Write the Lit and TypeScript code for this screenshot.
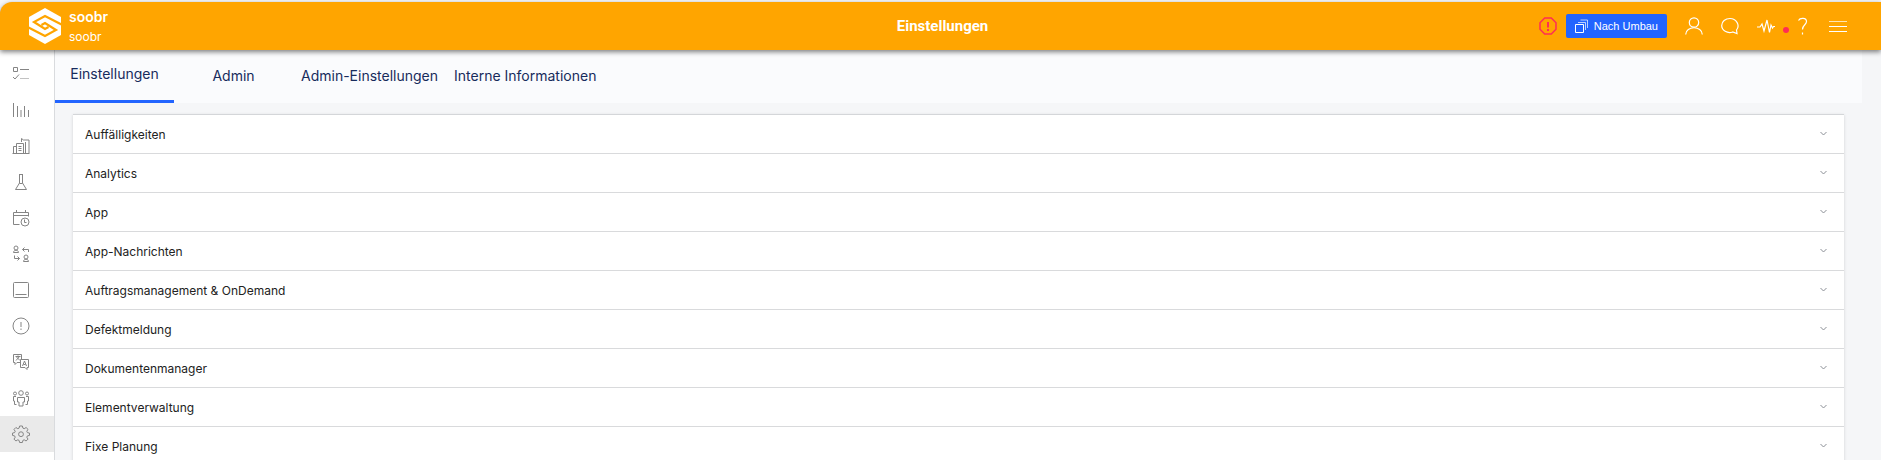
import { LitElement, html, css, svg } from "lit";
import { customElement, property, state } from "lit/decorators.js";

const icon = (body: unknown, w = 18, h = 18) =>
  html`<svg width=${w} height=${h} viewBox="0 0 ${w} ${h}" fill="none" stroke="currentColor" aria-hidden="true">${body}</svg>`;

const sideIcons: Array<{ label: string; body: unknown }> = [
  { label: "Aufgaben", body: svg`<path d="M1.500 2.500h4v4h-4zM8 4.500h9M1 12l2 2 4-4.500"/><path opacity=".5" d="M8 13.500h9"/>` },
  { label: "Statistik", body: svg`<path d="M1.500 2v14M5.500 5v11M9 9v7M12.500 5v11M16.500 9v7"/>` },
  { label: "Gebäude", body: svg`<path d="M.5 16.500h17M1.500 16V9.500h3M4.500 16V6.500h7V16M9.500 5V1.500l2 1.500h5.500V16M13.500 5V16M6.500 9.500h3M6.500 11.500h3M6.500 13.500h3"/>` },
  { label: "Labor", body: svg`<path d="M7 1.500h4M7.500 2v8L3.500 16.500h11L10.500 10V2M7.500 10.500h3"/>` },
  { label: "Kalender", body: svg`<path d="M1.500 15.500v-12h15v4M1.500 6.500h15M4.500 1v3M13.500 1v3M1.500 15.500h6"/><circle cx="13" cy="13" r="4"/><path d="M12.500 10.500v3h2"/>` },
  { label: "Zuweisung", body: svg`<circle cx="4" cy="3" r="2"/><path d="M1.500 7.500c0-3 5-3 5 0zM16.500 7V4.500h-6M12.500 2.500l-2 2 2 2M2.500 10.500v3h5M5.500 11.500l2 2-2 2"/><circle cx="14" cy="12" r="2"/><path d="M11.500 16.500c0-3 5-3 5 0z"/>` },
  { label: "Tablet", body: svg`<rect x="1.500" y="1.500" width="15" height="15" rx="1"/><path d="M3.500 13.500h11"/>` },
  { label: "Meldungen", body: svg`<circle cx="9" cy="9" r="8"/><path d="M9 5v5M9 11.500v1.500"/>` },
  { label: "Übersetzungen", body: svg`<path d="M8 9.500H5l-2 2v-2H1.500v-8h8V6M3.500 3.500h5M6 2.500v1M4 7.500l3.500-4M4.500 4l3.500 3.500M8.500 6.500h8v8H15v2l-2-2H8.500z"/><path d="M10.500 13l2-5 2 5M11.500 11.500h2"/>` },
  { label: "Teams", body: svg`<circle cx="9" cy="4" r="2.300"/><circle cx="3" cy="4.500" r="1.500"/><circle cx="15" cy="4.500" r="1.500"/><path d="M5.500 13V8.500h7V13h-1.500v4H7v-4zM4 7.500H1.500V12h1v3.500h2M14 7.500h2.500V12h-1v3.500h-2"/>` },
  { label: "Einstellungen", body: svg`<path d="M7.600 1h2.800l.5 2.100 1.300.6 1.900-1.200 1.900 1.900-1.200 1.900.6 1.300 2.100.5v2.300l-2.100.5-.6 1.300 1.200 1.900-1.900 1.900-1.900-1.200-1.300.6-.5 2.100H7.600l-.5-2.100-1.300-.6-1.900 1.200L2 14.100l1.200-1.900-.6-1.300-2.100-.5V8.100l2.100-.5.6-1.300L2 4.400l1.900-1.900 1.900 1.200 1.300-.6z"/><circle cx="9" cy="9.200" r="2.400"/>` },
];

@customElement("app-header")
class AppHeader extends LitElement {
  static styles = css`
    :host { display: block; position: relative; z-index: 2; padding-top: 2px; color: #fff; font-family: Inter, sans-serif; }
    * { box-sizing: border-box; }
    .bar { display: grid; grid-template-columns: 1fr auto 1fr; align-items: center; height: 48px; padding: 0 25px 0 29px; background: #ffa500; border-top-left-radius: 12px; box-shadow: 0 2px 5px rgba(0, 0, 0, 0.5); }
    .brand { display: flex; align-items: center; gap: 8px; color: inherit; text-decoration: none; }
    .names { display: flex; flex-direction: column; padding-top: 2px; font-size: 12px; line-height: 20px; }
    .name { font-size: 14px; font-weight: 600; }
    .title { margin: 0; font: 700 15px/20px Roboto, sans-serif; }
    .actions { display: flex; justify-content: flex-end; align-items: center; }
    button { font: inherit; color: inherit; background: none; border: 0; padding: 0; cursor: pointer; }
    svg { display: block; }
    .tool { display: grid; place-items: center; position: relative; width: 36px; height: 36px; }
    .alert { color: #ff2d55; }
    .primary { display: flex; align-items: center; gap: 6px; height: 24px; margin-right: 9px; padding: 0 9px; background: #2264ff; border-radius: 2px; font: 11px/16px "Liberation Sans", Arial, sans-serif; }
    .badge { position: absolute; right: -5px; bottom: 11px; width: 6px; height: 6px; border-radius: 50%; background: #ff2d55; }
  `;

  render() {
    return html`<header class="bar">
      <a class="brand" href="#">
        <svg width="32" height="36" viewBox="0 0 32 36" aria-hidden="true">
          <path fill="#fff" d="M16 0l16 9v18l-16 9L0 27V9z"/>
          <path fill="none" stroke="#ffa500" stroke-width="2.200" d="M32.500 16.500L16 8 5 14l11 7 3.500-2M-.5 19.500L16 28l11-6-11-7-3.500 2"/>
        </svg>
        <span class="names"><span class="name">soobr</span><span>soobr</span></span>
      </a>
      <h1 class="title">Einstellungen</h1>
      <div class="actions">
        <button class="tool alert" aria-label="Warnung">${icon(svg`<path stroke-width="1.500" d="M5.700 1h6.600L17 5.700v6.600L12.300 17H5.700L1 12.300V5.700z"/><path stroke-width="2" d="M9 5v5.500M9 12v2"/>`)}</button>
        <button class="primary">${icon(svg`<path d="M.5 5.500h8v8h-8z"/><path opacity=".7" d="M3 3.500h7.500V11M5.500 1h7V9"/>`, 13, 14)}Nach Umbau</button>
        <button class="tool" aria-label="Benutzer">${icon(svg`<circle cx="9" cy="5.500" r="4.700" stroke-width="1.200"/><path stroke-width="1.200" d="M.7 17.500c0-9 16.600-9 16.600 0"/>`)}</button>
        <button class="tool" aria-label="Chat">${icon(svg`<path stroke-width="1.200" d="M16 16.500l-.5-3.500c4-5-.5-11.500-6.500-11.500-4.700 0-8.300 3.200-8.300 7 0 5 5.600 8.300 11 6.500z"/>`)}</button>
        <button class="tool" aria-label="Aktivität">${icon(svg`<path stroke-width="1.200" d="M0 10h3l2-3 2 7L10 3l2.500 12.500L14 8l1.500 3 1-1.500H18"/>`)}<span class="badge"></span></button>
        <button class="tool" aria-label="Hilfe">${icon(svg`<path stroke-width="1.200" d="M5.500 3.500C7 .5 13.500.5 13.500 4.500c0 3.500-4 3-4 8M9.500 15.500V17.500"/>`)}</button>
        <button class="tool" aria-label="Menü">${icon(svg`<path d="M0 9.500h18M0 14.500h18"/><path opacity=".7" d="M0 4.500h18"/>`)}</button>
      </div>
    </header>`;
  }
}

@customElement("app-sidebar")
class AppSidebar extends LitElement {
  static styles = css`
    :host { display: block; flex: none; width: 55px; box-sizing: border-box; padding-top: 6px; background: #fff; border-right: 1px solid #d9dbde; }
    .item { display: flex; align-items: center; height: 36px; padding-left: 12px; color: #858585; }
    .active { background: #eaeaea; }
  `;
  @property({ type: Number }) active = 10;

  render() {
    return html`<nav>${sideIcons.map(
      (s, i) => html`<a class="item ${i === this.active ? "active" : ""}" href="#" aria-label=${s.label}>${icon(s.body)}</a>`
    )}</nav>`;
  }
}

@customElement("app-root")
class AppRoot extends LitElement {
  static styles = css`
    :host { display: flex; flex-direction: column; height: 100vh; overflow: hidden; background: #f5f6f8; font-family: Inter, sans-serif; }
    * { box-sizing: border-box; }
    .body { display: flex; flex: 1; min-height: 0; }
    .main { flex: 1; min-width: 0; overflow: hidden; padding-right: 19px; }
    button { font: inherit; background: none; border: 0; cursor: pointer; }
    .tabs { display: flex; height: 53px; background: #fafbfd; }
    .tab { min-width: 119px; padding: 0 8px 2px; color: #172b5c; font-size: 14px; line-height: 20px; border-bottom: 0 solid #2264ff; }
    .selected { border-bottom-width: 3px; }
    .list { margin: 11px 18px 0; background: #fff; border-top: 1px solid #d4d6d9; box-shadow: 0 1px 3px rgba(0, 0, 0, 0.15); }
    .row { display: flex; align-items: center; justify-content: space-between; width: 100%; height: 39px; padding: 0 17px 0 12px; border-bottom: 1px solid #d9dadc; color: #222; font-size: 12px; line-height: 20px; text-align: left; }
    .label { padding-top: 2px; }
    .chevron { color: #8b8f96; margin-bottom: 2px; }
  `;
  @state() private tab = 0;
  private tabs = ["Einstellungen", "Admin", "Admin-Einstellungen", "Interne Informationen"];
  private sections = ["Auffälligkeiten", "Analytics", "App", "App-Nachrichten", "Auftragsmanagement & OnDemand", "Defektmeldung", "Dokumentenmanager", "Elementverwaltung", "Fixe Planung"];

  render() {
    return html`<app-header></app-header>
      <div class="body">
        <app-sidebar></app-sidebar>
        <main class="main">
          <div class="tabs" role="tablist">
            ${this.tabs.map((t, i) => html`<button class="tab ${i === this.tab ? "selected" : ""}" role="tab" aria-selected=${i === this.tab} @click=${() => (this.tab = i)}>${t}</button>`)}
          </div>
          <div class="list">
            ${this.sections.map((s) => html`<button class="row" aria-expanded="false"><span class="label">${s}</span><svg class="chevron" width="7" height="5" viewBox="0 0 7 5" fill="none" stroke="currentColor" aria-hidden="true"><path d="M.5 1l3 3 3-3"/></svg></button>`)}
          </div>
        </main>
      </div>`;
  }
}
